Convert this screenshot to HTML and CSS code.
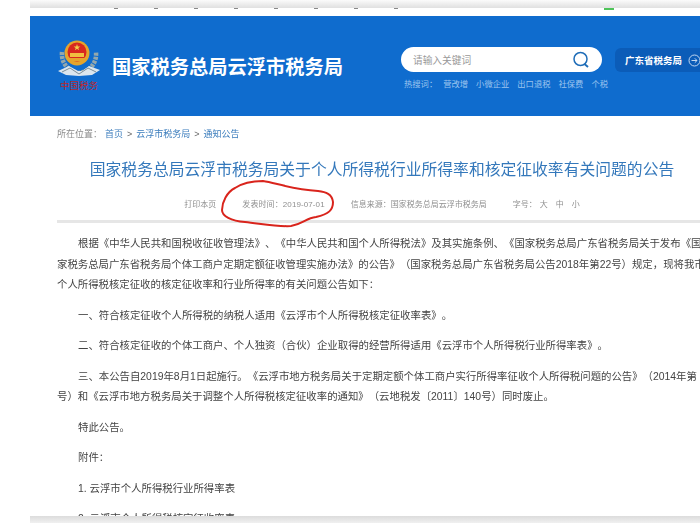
FILE: index.html
```html
<!DOCTYPE html>
<html lang="zh-CN">
<head>
    <meta charset="UTF-8">
    <title>国家税务总局云浮市税务局</title>
    <link rel="stylesheet" href="styles.css">
</head>
<body>
    <div class="page">
        <div class="edge-top"></div>
        <div class="cut-row">
            <i></i><i></i><i></i><i></i><i></i><i></i><i></i><i></i><i class="green"></i>
        </div>

        <!-- Header -->
        <header class="site-header">
            <div class="brand">
                <div class="emblem">
                    <svg width="42" height="40" viewBox="0 0 42 40">
                        <path d="M4 12 C3 22 9 31 21 33 C33 31 39 22 38 12" fill="none" stroke="#93a7ac" stroke-width="4.500" stroke-dasharray="3 1"/>
                        <path d="M0 31 L11 26 L20 31 L24 31 L31 26 L42 30 L34 35 L21 36 L8 35 Z" fill="#dbe6ee"/>
                        <path d="M4 32 L12 28 L21 34 L30 28 L38 32" fill="none" stroke="#7d8f99" stroke-width="1"/>
                        <circle cx="19" cy="13" r="12.500" fill="#e5a52c"/>
                        <circle cx="19" cy="12" r="9.500" fill="#d8281f"/>
                        <path d="M19 4 l.8 2.400 h2.500 l-2 1.500 .8 2.400 -2.100 -1.500 -2.100 1.500 .8 -2.400 -2 -1.500 h2.500 Z" fill="#f3d14a"/>
                        <rect x="12" y="13" width="14" height="4" fill="#f0c040"/>
                        <rect x="10" y="18" width="18" height="3" fill="#e5a52c"/>
                    </svg>
                    <span class="emblem-text">中国税务</span>
                </div>
                <h1>国家税务总局云浮市税务局</h1>
            </div>
            <div class="search-area">
                <div class="search-box">
                    <span class="placeholder">请输入关键词</span>
                    <svg width="18" height="18" viewBox="0 0 18 18">
                        <circle cx="8.500" cy="8" r="6.500" fill="none" stroke="#1f6db8" stroke-width="1.500"/>
                        <path d="M12.500 13 L16 16" stroke="#1f6db8" stroke-width="2"/>
                    </svg>
                </div>
                <div class="hot-words">
                    <span>热搜词：</span><span>营改增</span><span>小微企业</span><span>出口退税</span><span>社保费</span><span>个税</span>
                </div>
            </div>
            <a class="province-btn" href="#">
                广东省税务局
                <svg width="13" height="13" viewBox="0 0 13 13">
                    <circle cx="6.500" cy="6.500" r="5.500" fill="none" stroke="#c4d8f0" stroke-width="1"/>
                    <path d="M3.500 6.500 H9 M6.800 4.300 L9 6.500 L6.800 8.700" fill="none" stroke="#c4d8f0" stroke-width="1"/>
                </svg>
            </a>
        </header>

        <!-- Article -->
        <main class="article">
            <div class="crumbs">
                <span class="crumb-label">所在位置：</span>
                <a href="#">首页</a><i>&gt;</i><a href="#">云浮市税务局</a><i>&gt;</i><a href="#">通知公告</a>
            </div>
            <h2>国家税务总局云浮市税务局关于个人所得税行业所得率和核定征收率有关问题的公告</h2>
            <div class="meta">
                <span>打印本页</span>
                <span class="date">发表时间：2019-07-01</span>
                <span>信息来源：国家税务总局云浮市税务局</span>
                <span class="font-size"><span class="font-label">字号：</span><span>大</span><span>中</span><span>小</span></span>
            </div>
            <div class="content">
                <p>根据《中华人民共和国税收征收管理法》、《中华人民共和国个人所得税法》及其实施条例、《国家税务总局广东省税务局关于发布《国<br><span class="cont">家税务总局广东省税务局个体工商户定期定额征收管理实施办法》的公告》（国家税务总局广东省税务局公告2018年第22号）规定，现将我市</span><br><span class="cont">个人所得税核定征收的核定征收率和行业所得率的有关问题公告如下：</span></p>
                <p>一、符合核定征收个人所得税的纳税人适用《云浮市个人所得税核定征收率表》。</p>
                <p>二、符合核定征收的个体工商户、个人独资（合伙）企业取得的经营所得适用《云浮市个人所得税行业所得率表》。</p>
                <p>三、本公告自2019年8月1日起施行。《云浮市地方税务局关于定期定额个体工商户实行所得率征收个人所得税问题的公告》（2014年第<br><span class="cont">号）和《云浮市地方税务局关于调整个人所得税核定征收率的通知》（云地税发〔2011〕140号）同时废止。</span></p>
                <p>特此公告。</p>
                <p>附件：</p>
                <p>1. 云浮市个人所得税行业所得率表</p>
                <p>2. 云浮市个人所得税核定征收率表</p>
            </div>
        </main>

        <!-- hand drawn mark over the date -->
        <svg class="red-mark" width="114" height="50" viewBox="0 0 114 50">
            <path d="M14 8 C20 4 30 1 42 1 C55 3 70 9 97 11 C105 12 111 14 112 22 C112 30 108 34 95 37 C85 38 82 44 70 46 C58 47 42 44 24 42 C10 41 1 36 1 30 C1 22 6 12 14 8 Z" fill="none" stroke="#d9241c" stroke-width="2"/>
        </svg>

        <div class="edge-bottom"></div>
    </div>
</body>
</html>
```

FILE: styles.css
```css
body {
    margin: 0;
    background-color: #ffffff;
    font-family: "Liberation Sans", "Noto Sans CJK SC", sans-serif;
    color: #444444;
    text-spacing-trim: space-all;
}

.page {
    position: relative;
    width: 700px;
    height: 523px;
    overflow: hidden;
    padding-left: 30px;
    box-sizing: border-box;
    filter: blur(0.35px);
}

/* Screenshot edges */
.edge-top {
    height: 8px;
    background: linear-gradient(#fbfbfb, #e0e0e0);
}
.cut-row {
    display: flex;
    gap: 36px;
    height: 8px;
    padding-left: 84px;
}
.cut-row i {
    width: 4px;
    height: 1px;
    background-color: #888888;
}
.cut-row .green {
    width: 10px;
    height: 2px;
    margin-left: 170px;
    background-color: #4fc45a;
}
.edge-bottom {
    position: absolute;
    left: 30px;
    right: 0;
    bottom: 0;
    height: 7px;
    background: linear-gradient(#dcdcdc, #f0f0f0);
}

/* Header */
.site-header {
    display: flex;
    align-items: flex-start;
    height: 100px;
    background-color: #0f6cce;
    color: #ffffff;
}
.brand {
    display: flex;
    align-items: center;
    flex-shrink: 0;
    width: 371px;
    height: 100px;
}
.emblem {
    display: flex;
    flex-direction: column;
    align-items: center;
    width: 42px;
    margin-left: 28px;
}
.emblem-text {
    font-size: 9.500px;
    line-height: 12px;
    color: #b8262d;
    white-space: nowrap;
}
.brand h1 {
    margin: 0 0 0 12px;
    font-size: 19.250px;
    font-weight: bold;
    white-space: nowrap;
}

.search-area {
    flex-shrink: 0;
    width: 214px;
    padding-top: 31px;
}
.search-box {
    display: flex;
    align-items: center;
    justify-content: space-between;
    width: 201px;
    height: 25px;
    padding: 0 12px;
    box-sizing: border-box;
    border-radius: 13px;
    background-color: #ffffff;
}
.placeholder {
    font-size: 9.700px;
    color: #999999;
}
.hot-words {
    display: flex;
    gap: 8px;
    margin: 5px 0 0 3px;
    font-size: 8.300px;
    white-space: nowrap;
    color: #9cc4ee;
}
.hot-words span:first-child {
    margin-right: -2px;
}

.province-btn {
    display: flex;
    align-items: center;
    gap: 6px;
    flex-shrink: 0;
    height: 24px;
    margin-top: 32px;
    padding: 0 10px;
    border-radius: 6px;
    background-color: #0b5cb8;
    color: #ffffff;
    font-size: 9.500px;
    font-weight: bold;
    text-decoration: none;
    white-space: nowrap;
}

/* Article */
.article {
    width: 650px;
    margin-left: 27px;
}
.crumbs {
    display: flex;
    align-items: center;
    padding-top: 12px;
    font-size: 9px;
    line-height: 12px;
    color: #8a8a8a;
}
.crumb-label {
    margin-right: 3px;
}
.crumbs a {
    color: #3a7cbc;
    text-decoration: none;
}
.crumbs i {
    margin: 0 4px;
    font-style: normal;
    color: #666666;
}
.article h2 {
    margin: 19px 0 0;
    font-size: 15.800px;
    line-height: 22px;
    font-weight: normal;
    text-align: center;
    white-space: nowrap;
    color: #3478bb;
}
.meta {
    display: flex;
    justify-content: center;
    gap: 26px;
    margin-top: 18px;
    padding-bottom: 10px;
    border-bottom: 3px solid #e6e6e6;
    font-size: 8px;
    line-height: 11px;
    color: #8f8f8f;
    white-space: nowrap;
}
.date {
    letter-spacing: 0.1px;
}
.font-size {
    display: flex;
    gap: 8px;
}
.font-label {
    margin-right: -5px;
}

.content {
    padding-top: 11px;
    font-size: 10.400px;
    line-height: 20.500px;
    color: #444444;
    white-space: nowrap;
}
.content p {
    margin: 0 0 10px;
    padding-left: 21px;
}
.content .cont {
    margin-left: -21px;
}

.red-mark {
    position: absolute;
    left: 221px;
    top: 180px;
}
```
